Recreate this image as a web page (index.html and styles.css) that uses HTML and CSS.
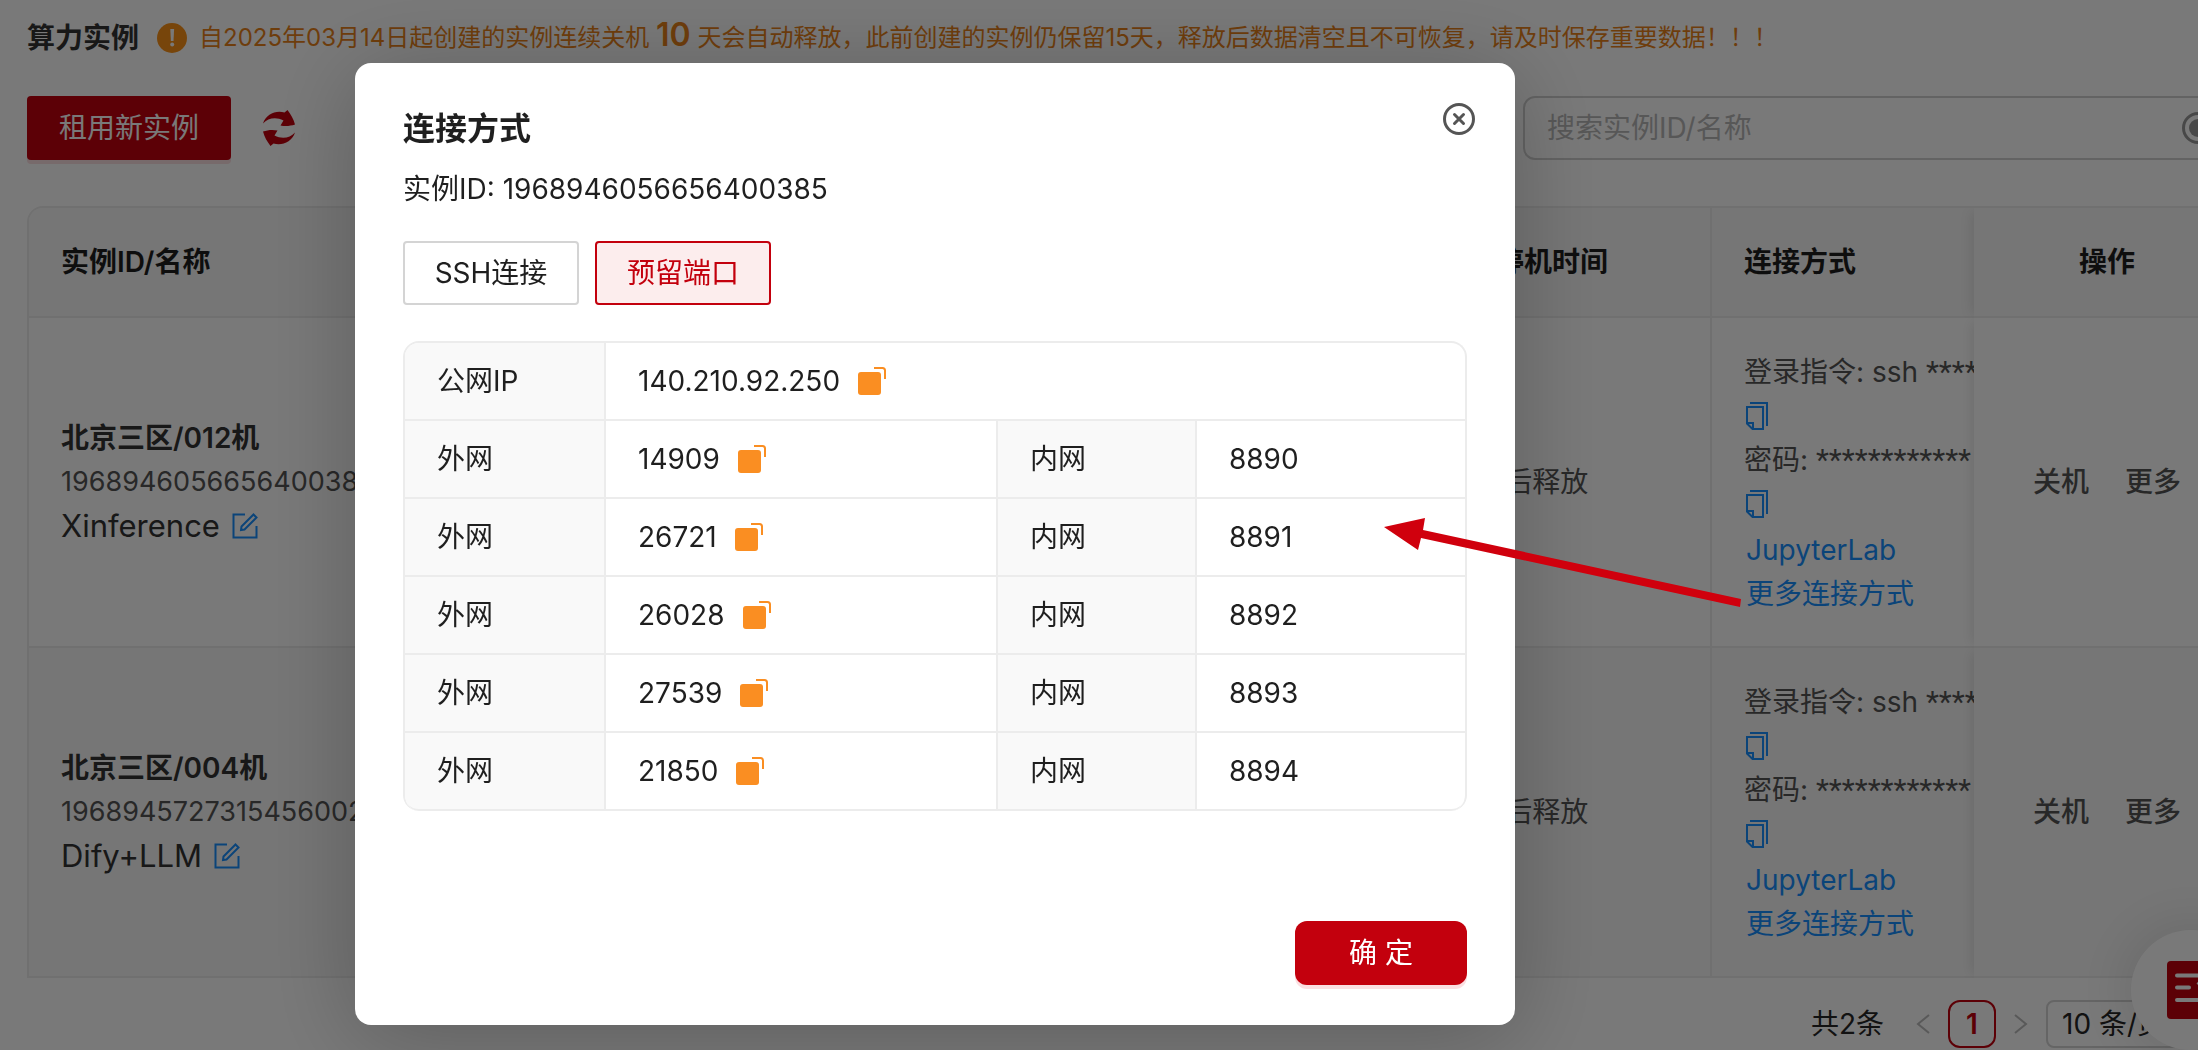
FILE: index.html
```html
<!DOCTYPE html>
<html lang="zh-CN">
<head>
<meta charset="utf-8">
<title>算力实例</title>
<link rel="stylesheet" href="styles.css">
</head>
<body>
<svg class="sprite" aria-hidden="true">
  <symbol id="i-copy" viewBox="0 0 22 28"><path d="M4 1H21V24" /><path d="M1 5H17V27H6.500L1 21.500Z" /><path d="M1 21H7V27" /></symbol>
  <symbol id="i-edit" viewBox="0 0 26 26"><path d="M13 1.500H1.500V24.500H24.500V13" /><path d="M21.500 1.500L24.500 4.500L12.500 16.500L9 17L9.500 13.500Z" /></symbol>
  <symbol id="i-dup" viewBox="0 0 28 28"><rect x="0" y="5" width="23" height="23" rx="3" fill="currentColor" /><path d="M16 1H24.500Q27 1 27 3.500V12" fill="none" stroke="currentColor" stroke-width="2" /></symbol>
</svg>

<main class="page">
  <header class="notice">
    <h1 class="notice-title">算力实例</h1>
    <svg class="notice-icon" viewBox="0 0 30 30" aria-hidden="true"><circle cx="15" cy="15" r="15" fill="#fa9219"/><path d="M13.300 6h3.800l-.6 12h-2.600z" fill="#fff"/><circle cx="15.200" cy="21.500" r="2" fill="#fff"/></svg>
    <p class="notice-text">自2025年03月14日起创建的实例连续关机 <strong>10</strong> 天会自动释放，此前创建的实例仍保留15天，释放后数据清空且不可恢复，请及时保存重要数据！！！</p>
  </header>

  <div class="toolbar">
    <button class="btn-rent" type="button">租用新实例</button>
    <button class="btn-refresh" type="button" aria-label="刷新">
      <svg viewBox="0 0 32 36" width="32" height="36" fill="#c3000d" aria-hidden="true"><path d="M0 13.500C3 4 13 0 21.500 2.500L24.500 0C28 4.500 30.500 9 32 14.500C27.500 16 22.500 16.500 17.500 15.500L20.500 10.500C13 6.500 5 8 0 13.500Z"/><path d="M32 22.500C29 32 19 36 10.500 33.500L7.500 36C4 31.500 1.500 27 0 21.500C4.500 20 9.500 19.500 14.500 20.500L11.500 25.500C19 29.500 27 28 32 22.500Z"/></svg>
    </button>
    <label class="search">
      <input type="text" placeholder="搜索实例ID/名称" aria-label="搜索实例ID/名称">
      <svg viewBox="0 0 32 32" width="32" height="32" aria-hidden="true"><circle cx="16" cy="16" r="14.500" fill="none" stroke="#999" stroke-width="3"/><circle cx="16" cy="16" r="9" fill="#999"/></svg>
    </label>
  </div>

  <table class="list">
    <colgroup><col><col class="c-stop"><col class="c-conn"><col class="c-act"></colgroup>
    <thead>
      <tr><th>实例ID/名称</th><th>预计停机时间</th><th>连接方式</th><th class="act">操作</th></tr>
    </thead>
    <tbody>
      <tr>
        <td>
          <b>北京三区/012机</b>
          <div class="uid">1968946056656400385</div>
          <div class="name">Xinference <svg class="edit"><use href="#i-edit"/></svg></div>
        </td>
        <td>15 天后释放</td>
        <td class="conn">
          <div>登录指令: ssh <span class="stars">****</span></div>
          <div><svg class="copy"><use href="#i-copy"/></svg></div>
          <div>密码: <span class="stars">************</span></div>
          <div><svg class="copy"><use href="#i-copy"/></svg></div>
          <div class="link"><a href="#">JupyterLab</a></div>
          <div class="link"><a href="#">更多连接方式</a></div>
        </td>
        <td class="act"><div class="acts"><a href="#">关机</a><a href="#">更多</a></div></td>
      </tr>
      <tr>
        <td>
          <b>北京三区/004机</b>
          <div class="uid">1968945727315456002</div>
          <div class="name">Dify+LLM <svg class="edit"><use href="#i-edit"/></svg></div>
        </td>
        <td>15 天后释放</td>
        <td class="conn">
          <div>登录指令: ssh <span class="stars">****</span></div>
          <div><svg class="copy"><use href="#i-copy"/></svg></div>
          <div>密码: <span class="stars">************</span></div>
          <div><svg class="copy"><use href="#i-copy"/></svg></div>
          <div class="link"><a href="#">JupyterLab</a></div>
          <div class="link"><a href="#">更多连接方式</a></div>
        </td>
        <td class="act"><div class="acts"><a href="#">关机</a><a href="#">更多</a></div></td>
      </tr>
    </tbody>
  </table>

  <nav class="pager" aria-label="分页">
    <span>共2条</span>
    <button class="step" type="button" aria-label="上一页"><svg viewBox="0 0 14 20" width="14" height="20"><path d="M13 1L2 10L13 19"/></svg></button>
    <button class="current" type="button">1</button>
    <button class="step" type="button" aria-label="下一页"><svg viewBox="0 0 14 20" width="14" height="20"><path d="M1 1L12 10L1 19"/></svg></button>
    <select aria-label="每页条数"><option>10 条/页</option></select>
  </nav>
</main>

<button class="float" type="button" aria-label="反馈">
  <svg viewBox="0 0 48 58" width="48" height="58" aria-hidden="true"><rect width="48" height="58" rx="4" fill="#c3000d"/><path d="M10 14.500H40M10 26.500H22M10 39H40" stroke="#fff" stroke-width="4" stroke-linecap="round"/><path d="M31 21L37 28L43 20" fill="none" stroke="#fff" stroke-width="4"/></svg>
</button>

<div class="mask">
  <section class="modal" role="dialog" aria-labelledby="dlg-title">
    <header class="modal-head">
      <h2 id="dlg-title">连接方式</h2>
      <button class="close" type="button" aria-label="关闭"><svg viewBox="0 0 32 32" width="32" height="32"><circle cx="16" cy="16" r="14.500"/><path d="M11.500 11.500L20.500 20.500M20.500 11.500L11.500 20.500"/></svg></button>
    </header>
    <p class="modal-id">实例ID: 1968946056656400385</p>
    <div class="tabs">
      <button type="button">SSH连接</button>
      <button class="on" type="button">预留端口</button>
    </div>
    <table class="ports">
      <colgroup><col class="p-label"><col><col class="p-label"><col class="p-inner"></colgroup>
      <tbody>
        <tr><th>公网IP</th><td colspan="3">140.210.92.250<svg class="dup"><use href="#i-dup"/></svg></td></tr>
        <tr><th>外网</th><td>14909<svg class="dup"><use href="#i-dup"/></svg></td><th>内网</th><td>8890</td></tr>
        <tr><th>外网</th><td>26721<svg class="dup"><use href="#i-dup"/></svg></td><th>内网</th><td>8891</td></tr>
        <tr><th>外网</th><td>26028<svg class="dup"><use href="#i-dup"/></svg></td><th>内网</th><td>8892</td></tr>
        <tr><th>外网</th><td>27539<svg class="dup"><use href="#i-dup"/></svg></td><th>内网</th><td>8893</td></tr>
        <tr><th>外网</th><td>21850<svg class="dup"><use href="#i-dup"/></svg></td><th>内网</th><td>8894</td></tr>
      </tbody>
    </table>
    <footer class="modal-foot"><button type="button">确 定</button></footer>
  </section>
</div>

<svg class="arrow" viewBox="0 0 358 90" width="358" height="90" aria-hidden="true"><path d="M0 9L41 0L39 12L357 81L356 89L37 20L34 32Z" fill="#d0000d"/></svg>
</body>
</html>
```

FILE: styles.css
```css
* { box-sizing: border-box; }

body {
  margin: 0;
  min-height: 100vh;
  overflow: hidden;
  background: #fff;
  color: #555;
  font: 28px/44px Inter, "Noto Sans CJK SC", sans-serif;
}

h1, h2, p { margin: 0; }
a { color: #1890ff; text-decoration: none; }
button, input, select { font: inherit; margin: 0; }
button { padding: 0; border: 0; background: none; cursor: pointer; }
svg { display: block; }
.sprite { position: absolute; width: 0; height: 0; }

/* The list runs past the right edge of the window */
.page { margin-right: -44px; padding: 16px 0 0 27px; }

.notice { display: flex; align-items: center; height: 44px; }
.notice-title { color: #333; font-size: 28px; line-height: 44px; font-weight: 600; }
.notice-icon { width: 30px; height: 30px; margin: 0 12px 0 18px; }
.notice-text { color: #e8821a; font-size: 24px; line-height: 44px; white-space: nowrap; }
.notice-text strong { font-size: 32px; font-weight: 600; line-height: 32px; }

.toolbar { display: flex; align-items: center; margin-top: 36px; }
.btn-rent {
  width: 204px;
  height: 64px;
  border-radius: 4px;
  background: #c3000d;
  color: #fff;
  box-shadow: 0 4px 0 #fbdfe1;
}
.btn-refresh { margin-left: 32px; }
.search {
  display: flex;
  align-items: center;
  width: 719px;
  height: 64px;
  margin-left: auto;
  padding: 0 26px 0 22px;
  border: 2px solid #d0d0d0;
  border-radius: 12px;
}
.search input { flex: 1; min-width: 0; padding: 0; border: 0; outline: 0; background: none; }
.search input::placeholder { color: #b8b8b8; opacity: 1; }

.list {
  width: 100%;
  margin-top: 46px;
  table-layout: fixed;
  border-collapse: separate;
  border-spacing: 0;
  border: 2px solid #ececec;
  border-bottom: 0;
  border-radius: 16px 16px 0 0;
}
.c-stop { width: 304px; }
.c-conn { width: 262px; }
.c-act { width: 266px; }
.list th, .list td { padding: 0 0 0 32px; text-align: left; white-space: nowrap; }
.list th { height: 110px; background: #f8f8f8; color: #1f1f1f; font-weight: 600; border-bottom: 2px solid #ececec; }
.list th:first-child { border-radius: 14px 0 0 0; }
.list td { height: 330px; border-bottom: 2px solid #ececec; }
.list tr:last-child td { background: #f9f9f9; }
.list th:nth-child(2), .list td:nth-child(2) { border-right: 2px solid #ececec; }
.list b { display: block; color: #333; font-weight: 600; }
.list .uid { font-size: 27px; }
.list .name { display: flex; align-items: center; color: #333; font-size: 31px; }
.edit { width: 26px; height: 26px; margin-left: 12px; fill: none; stroke: #1890ff; stroke-width: 2; }
.copy { width: 22px; height: 28px; margin: 8px 2px; fill: none; stroke: #1890ff; stroke-width: 2; }
.conn div { display: flow-root; height: 44px; }
.conn .link { padding: 2px 0 0 2px; }
.stars { font-family: Roboto, sans-serif; font-size: 30px; }
.list th.act, .list td.act { position: relative; padding: 0; text-align: center; box-shadow: -6px 0 12px -4px rgba(0, 0, 0, .1); clip-path: inset(0 0 0 -20px); }
.list tbody tr:first-child .act { background: #fff; }
.acts { display: flex; justify-content: center; gap: 36px; }
.acts a { color: #555; font-weight: 500; }

.pager { display: flex; align-items: center; gap: 18px; justify-content: flex-end; margin-top: 22px; color: #262626; }
.pager > span { margin-right: 14px; }
.step path { fill: none; stroke: #bbb; stroke-width: 2; }
.current { width: 48px; height: 48px; border: 2px solid #c3000d; border-radius: 12px; color: #c3000d; font-weight: 600; }
.pager select {
  width: 196px;
  height: 48px;
  padding: 0 14px;
  appearance: none;
  border: 2px solid #d4d4d4;
  border-radius: 8px;
  background: none;
  color: #262626;
}

.float {
  position: fixed;
  right: -53px;
  bottom: 0;
  display: grid;
  place-items: center;
  width: 120px;
  height: 120px;
  border-radius: 50%;
  background: #fff;
  box-shadow: 0 0 64px rgba(0, 0, 0, .14);
}

.mask {
  position: fixed;
  inset: 0;
  padding: 63px 0 0 355px;
  background: rgba(0, 0, 0, .525);
}
.modal {
  width: 1160px;
  max-width: 100%;
  padding: 40px 48px;
  border-radius: 16px;
  background: #fff;
  color: #1f1f1f;
  box-shadow: 0 12px 96px rgba(0, 0, 0, .24);
}
.modal-head { display: flex; justify-content: space-between; height: 64px; }
.modal-head h2 { padding-top: 4px; font-size: 32px; line-height: 44px; font-weight: 600; }
.close { height: 32px; margin-right: -8px; }
.close svg { fill: none; stroke: #555; stroke-width: 3; stroke-linecap: round; }
.tabs { display: flex; gap: 16px; margin-top: 30px; }
.tabs button { width: 176px; height: 64px; border: 2px solid #d4d4d4; border-radius: 4px; background: #fff; color: #1f1f1f; }
.tabs .on { border-color: #c3000d; background: #fceded; color: #c3000d; }

.ports {
  width: 100%;
  margin-top: 36px;
  table-layout: fixed;
  border-collapse: separate;
  border-spacing: 0;
  border: 2px solid #ececec;
  border-bottom: 0;
  border-radius: 16px;
  overflow: hidden;
}
.p-label { width: 201px; }
.p-inner { width: 268px; }
.ports th, .ports td { height: 78px; padding: 0 0 0 32px; border-bottom: 2px solid #ececec; font-weight: 400; text-align: left; }
.ports th { background: #f9f9f9; border-right: 2px solid #ececec; }
.ports td + th { border-left: 2px solid #ececec; }
.ports tr:last-child th:first-child { border-bottom-left-radius: 14px; }
.ports tr:last-child td:last-child { border-bottom-right-radius: 14px; }
.dup { display: inline-block; width: 28px; height: 28px; margin-left: 18px; vertical-align: -4px; color: #fa8e22; }

.modal-foot { display: flex; justify-content: flex-end; margin-top: 110px; }
.modal-foot button { width: 172px; height: 64px; border-radius: 12px; background: #c3000d; color: #fff; box-shadow: 0 4px 0 #fbdfe1; }

.arrow { position: fixed; left: 1384px; top: 518px; }
```
